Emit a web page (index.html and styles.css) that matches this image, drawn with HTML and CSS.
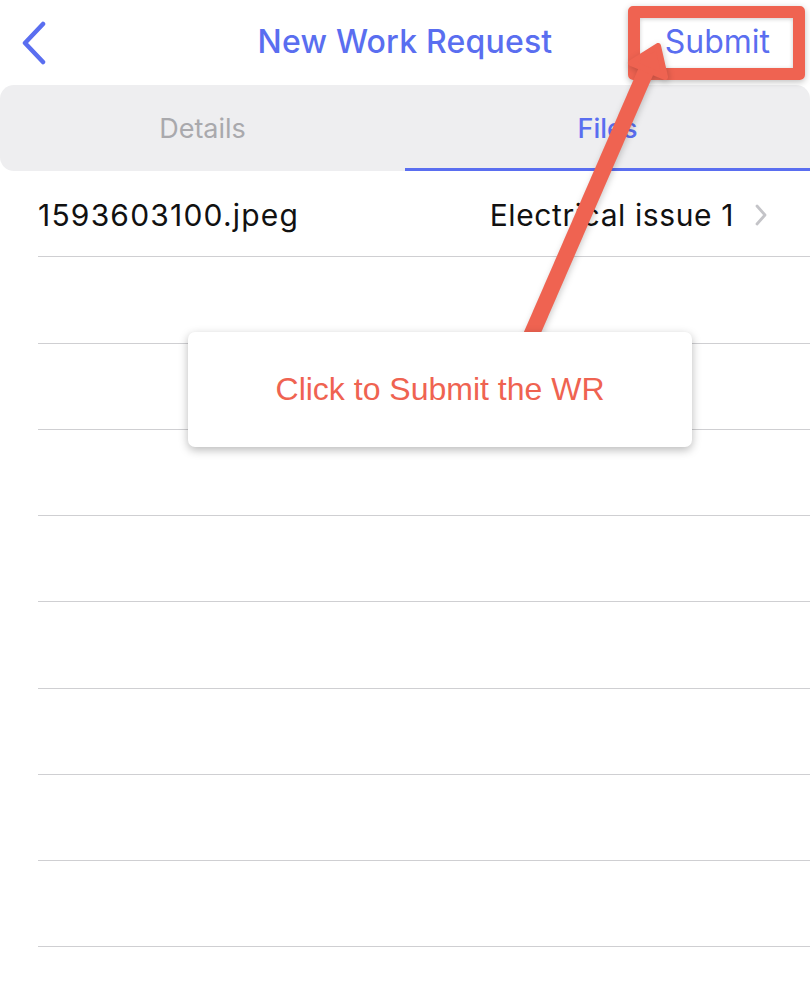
FILE: index.html
```html
<!DOCTYPE html>
<html>
<head>
<meta charset="utf-8">
<link rel="stylesheet" href="styles.css">
</head>
<body>
<div class="screen">
  <header class="nav">
    <div class="nav-left">
      <svg class="back" width="30" height="44" viewBox="0 0 30 44"><path d="M21 3 L3 22 L21 41" fill="none" stroke="#5a6ef0" stroke-width="4.5" stroke-linecap="round" stroke-linejoin="round"/></svg>
    </div>
    <div class="nav-title">New Work Request</div>
    <div class="nav-right"><span class="submit">Submit</span></div>
  </header>
  <div class="tabs">
    <div class="tab">Details</div>
    <div class="tab active">Files</div>
  </div>
  <ul class="list">
    <li class="row">
      <span class="name">1593603100.jpeg</span>
      <span class="meta">Electrical issue 1
        <svg class="chev" width="14" height="24" viewBox="0 0 14 24"><path d="M3 3 L11 12 L3 21" fill="none" stroke="#c4c4c8" stroke-width="2.8" stroke-linecap="round" stroke-linejoin="round"/></svg>
      </span>
    </li>
    <li class="row"></li>
    <li class="row"></li>
    <li class="row"></li>
    <li class="row"></li>
    <li class="row"></li>
    <li class="row"></li>
    <li class="row"></li>
    <li class="row"></li>
  </ul>

  <div class="highlight"></div>
  <svg class="arrow" width="810" height="992" viewBox="0 0 810 992">
    <g fill="#ef6351" stroke="#ef6351" stroke-linejoin="round">
      <line x1="527" y1="345" x2="650" y2="62" stroke-width="16"/>
      <polygon points="658,46 631,63 665,77" stroke-width="6"/>
    </g>
  </svg>
  <div class="tip">Click to Submit the WR</div>
</div>
</body>
</html>
```

FILE: styles.css
```css
* { box-sizing: border-box; }
html, body { margin: 0; padding: 0; background: #fff; }
body { width: 810px; height: 992px; overflow: hidden; font-family: Inter, "Noto Sans", sans-serif; }
.screen { position: relative; width: 810px; height: 992px; }

.nav {
  height: 85px;
  display: grid;
  grid-template-columns: 1fr auto 1fr;
  align-items: center;
}
.nav-left { padding-left: 22px; display: flex; align-items: center; }
.back { display: block; }
.nav-title {
  color: #5a6ef0;
  font-size: 32px;
  font-weight: 500;
  letter-spacing: 0.2px;
  padding-bottom: 2px;
}
.nav-right { display: flex; justify-content: flex-end; padding-right: 40px; }
.submit { color: #5a6ef0; font-size: 32px; font-weight: 400; padding-bottom: 2px; }

.tabs {
  height: 86px;
  background: #eeeef0;
  border-radius: 14px 14px 0 14px;
  display: grid;
  grid-template-columns: 1fr 1fr;
}
.tab {
  display: flex; align-items: center; justify-content: center;
  font-size: 27px;
  color: #a9a9ad;
  padding-top: 1px;
}
.tab.active {
  color: #5a6ef0;
  font-weight: 500;
  border-bottom: 3px solid #5a6ef0;
  padding-top: 4px;
}

.list { list-style: none; margin: 0; padding: 0 0 0 38px; }
.row {
  height: 86.25px;
  border-bottom: 1px solid #cfcfd2;
  display: flex;
  align-items: center;
  justify-content: space-between;
  font-size: 30px;
  color: #111;
  padding-right: 42px;
  padding-top: 2px;
}
.name { letter-spacing: 1.2px; }
.meta { display: flex; align-items: center; gap: 20px; letter-spacing: 0.6px; }
.chev { display: block; }

.highlight {
  position: absolute;
  left: 628px; top: 6px;
  width: 177px; height: 74px;
  border: 12px solid #ef6351;
  border-radius: 5px;
  box-shadow: 0 2px 6px rgba(0,0,0,0.25), inset 0 1px 4px rgba(0,0,0,0.2);
}
.arrow {
  position: absolute; left: 0; top: 0;
  filter: drop-shadow(1px 2px 3px rgba(0,0,0,0.2));
}
.tip {
  position: absolute;
  left: 188px; top: 332px;
  width: 504px; height: 115px;
  background: #fff;
  border-radius: 7px;
  box-shadow: 0 3px 10px rgba(0,0,0,0.28);
  display: flex; align-items: center; justify-content: center;
  font-family: "Liberation Sans", Arial, sans-serif;
  font-size: 32px;
  color: #ef6351;
  padding-bottom: 1px;
}
```
